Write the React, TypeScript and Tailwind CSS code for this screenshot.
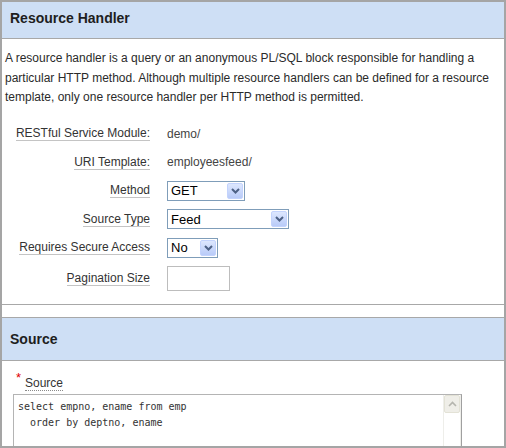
import React from "react";

const Chevron = () => (
  <svg width="9" height="6" viewBox="0 0 9 6">
    <path d="M1 1 L4.5 4.5 L8 1" fill="none" stroke="#4d6185" strokeWidth="2" />
  </svg>
);

const FakeSelect = ({ value, width }: { value: string; width: string }) => (
  <div className={`${width} h-[20px] border border-[#7f9db9] bg-white flex items-stretch p-[1px]`}>
    <div className="flex-1 flex items-center pl-[2px] text-[13px] leading-none text-black">{value}</div>
    <div className="w-[16px] rounded-[2px] border border-[#c3d3fd] bg-gradient-to-b from-[#dde7fe] to-[#b9cbf8] flex items-center justify-center">
      <Chevron />
    </div>
  </div>
);

const Label = ({ children }: { children: React.ReactNode }) => (
  <div className="w-[148px] flex justify-end">
    <span className="leading-[14px] border-b border-[#c4c4c4] text-[#333]">{children}</span>
  </div>
);

export default function App() {
  return (
    <div className="w-[506px] h-[448px] border-2 border-[#a5a5a5] bg-white overflow-hidden flex flex-col font-['Liberation_Sans',Arial,sans-serif] text-[12px] text-[#222]">
      {/* Section 1 */}
      <div className="h-[37px] shrink-0 bg-[#cedff5] border-b border-[#a8a8a8] flex items-center pl-[8px] pb-[3px]">
        <span className="text-[14px] font-bold text-[#1e1e1e]">Resource Handler</span>
      </div>
      <div className="h-[266px] shrink-0 border-b border-[#a8a8a8]">
        <p className="pt-[10px] pl-[3px] leading-[19.5px] whitespace-nowrap text-[#2a2a2a]">
          A resource handler is a query or an anonymous PL/SQL block responsible for handling a
          <br />
          particular HTTP method. Although multiple resource handlers can be defined for a resource
          <br />
          template, only one resource handler per HTTP method is permitted.
        </p>
        <div className="mt-[12px] flex flex-col">
          <div className="h-[28px] flex items-center gap-[17px]">
            <Label>RESTful Service Module:</Label>
            <span className="text-[#444]">demo/</span>
          </div>
          <div className="h-[29px] flex items-center gap-[17px]">
            <Label>URI Template:</Label>
            <span className="text-[#444]">employeesfeed/</span>
          </div>
          <div className="h-[28px] flex items-center gap-[17px]">
            <Label>Method</Label>
            <FakeSelect value="GET" width="w-[78px]" />
          </div>
          <div className="h-[29px] flex items-center gap-[17px]">
            <Label>Source Type</Label>
            <FakeSelect value="Feed" width="w-[122px]" />
          </div>
          <div className="h-[28px] flex items-center gap-[17px]">
            <Label>Requires Secure Access</Label>
            <FakeSelect value="No" width="w-[51px]" />
          </div>
          <div className="h-[34px] flex items-center gap-[17px]">
            <Label>Pagination Size</Label>
            <div className="w-[63px] h-[25px] border border-[#bdbdbd] bg-white" />
          </div>
        </div>
      </div>

      <div className="h-[12px] shrink-0" />

      {/* Section 2 */}
      <div className="h-[44px] shrink-0 bg-[#cedff5] border-t border-b border-[#a8a8a8] flex items-center pl-[8px]">
        <span className="text-[14px] font-bold text-[#1e1e1e]">Source</span>
      </div>
      <div className="flex-1 min-h-0">
        <div className="mt-[15px] ml-[14px] flex items-start">
          <span className="w-[9px] text-[13px] leading-[10px] text-[#e00000] -mt-[3px]">*</span>
          <span className="leading-[14px] border-b border-dotted border-[#8a8a8a] text-[#333]">Source</span>
        </div>
        <div className="mt-[3px] ml-[11px] w-[449px] h-[80px] border border-[#b4b4b4] border-r-[#a0a0a0] flex">
          <div className="flex-1 pt-[4px] pl-[4px] font-['DejaVu_Sans_Mono',monospace] text-[10px] leading-[16px] text-[#333] whitespace-pre">
            {"select empno, ename from emp\n  order by deptno, ename"}
          </div>
          <div className="w-[18px] border-l border-r border-[#eeeeea] flex flex-col">
            <div className="h-[18px] rounded-[2px] border border-[#e3e2d6] bg-[#efeee8] flex items-center justify-center">
              <svg width="9" height="6" viewBox="0 0 9 6">
                <path d="M1 5 L4.5 1.5 L8 5" fill="none" stroke="#b5b5ae" strokeWidth="1.6" />
              </svg>
            </div>
          </div>
        </div>
      </div>
    </div>
  );
}
